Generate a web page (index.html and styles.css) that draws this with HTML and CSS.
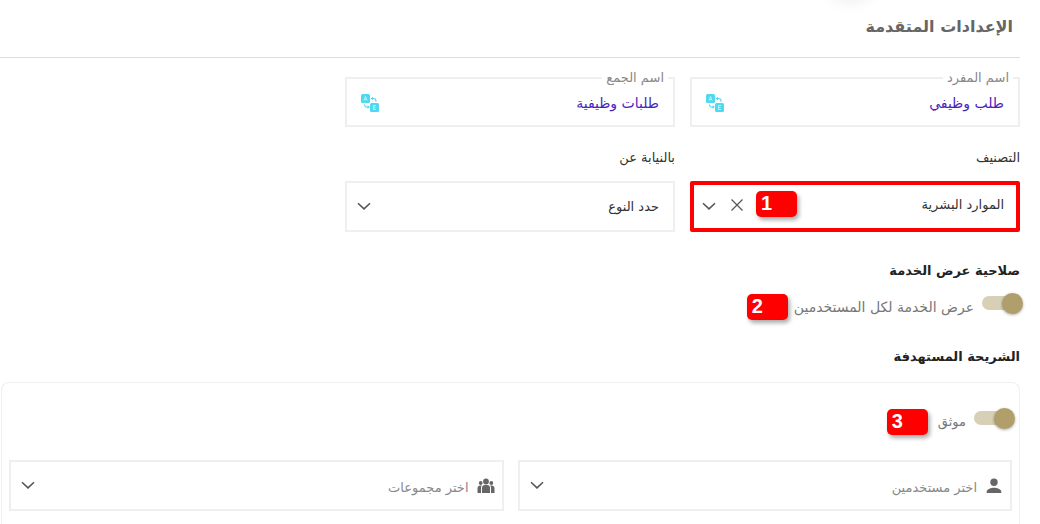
FILE: index.html
```html
<!DOCTYPE html>
<html lang="ar" dir="rtl">
<head>
<meta charset="utf-8">
<title>الإعدادات المتقدمة</title>
<link rel="stylesheet" href="styles.css">
</head>
<body>
<svg class="sprite" aria-hidden="true">
  <symbol id="chevron" viewBox="0 0 14 14"><path d="M1 4.200 7 9.900l6-5.700" fill="none" stroke="currentColor" stroke-width="1.500"/></symbol>
  <symbol id="translate" viewBox="0 0 18 18">
    <rect width="9" height="9" rx="1.500" fill="#4fd8f0"/>
    <rect x="9" y="9" width="9" height="9" rx="1.500" fill="#4fd8f0"/>
    <path d="M3 6.500 4.500 2.500 6 6.500M3.500 5.300h2M15 11.500h-2.500v4H15M12.500 13.500h2" fill="none" stroke="#d2f6fc" stroke-width=".8"/>
    <path d="M11 4.500h1.500a2.500 2.500 0 0 1 2.500 2.500v.8M7.500 13H6a2.500 2.500 0 0 1-2.500-2.500" fill="none" stroke="#4fd8f0" stroke-width="1.100"/>
    <path d="m12 2.700-2.500 1.800L12 6.300zM6.500 11.200 9 13l-2.500 1.800z" fill="#4fd8f0"/>
  </symbol>
</svg>
<div class="bubble"></div>
<main class="page">
  <header class="page-head"><h1>الإعدادات المتقدمة</h1></header>

  <form class="settings">
    <div class="fields">
      <fieldset class="named">
        <legend><label for="singular">اسم المفرد</label></legend>
        <div class="named-row">
          <input id="singular" type="text" value="طلب وظيفي">
          <button type="button" class="icon-button" aria-label="ترجمة"><svg class="translate"><use href="#translate"/></svg></button>
        </div>
      </fieldset>
      <fieldset class="named">
        <legend><label for="plural">اسم الجمع</label></legend>
        <div class="named-row">
          <input id="plural" type="text" value="طلبات وظيفية">
          <button type="button" class="icon-button" aria-label="ترجمة"><svg class="translate"><use href="#translate"/></svg></button>
        </div>
      </fieldset>
    </div>

    <div class="fields choices">
      <div>
        <label class="caption" for="category">التصنيف</label>
        <div class="select marked">
          <select id="category"><option>الموارد البشرية</option></select>
          <svg class="chevron"><use href="#chevron"/></svg>
          <button type="button" class="icon-button clear" aria-label="مسح"><svg viewBox="0 0 14 14"><path d="m1.500 1.500 11 11m0-11-11 11" fill="none" stroke="currentColor" stroke-width="1.200"/></svg></button>
          <span class="step step-in">1</span>
        </div>
      </div>
      <div>
        <label class="caption" for="behalf">بالنيابة عن</label>
        <div class="select">
          <select id="behalf"><option>حدد النوع</option></select>
          <svg class="chevron"><use href="#chevron"/></svg>
        </div>
      </div>
    </div>

    <h2>صلاحية عرض الخدمة</h2>
    <div class="switch-row">
      <input class="switch" type="checkbox" id="all-users" checked>
      <label class="wide-label" for="all-users">عرض الخدمة لكل المستخدمين</label>
      <span class="step">2</span>
    </div>

    <h2 class="audience-title">الشريحة المستهدفة</h2>
    <section class="audience">
      <div class="switch-row">
        <input class="switch" type="checkbox" id="verified" checked>
        <label for="verified">موثق</label>
        <span class="step step-far">3</span>
      </div>
      <div class="pickers">
        <div class="select picker">
          <select aria-label="المستخدمين"><option>اختر مستخدمين</option></select>
          <svg class="lead" viewBox="0 0 18 18" fill="currentColor"><circle cx="9" cy="5.300" r="3.700"/><path d="M1.700 16v-1.500C1.700 12 6.500 10.700 9 10.700s7.300 1.300 7.300 3.800V16z"/></svg>
          <svg class="chevron"><use href="#chevron"/></svg>
        </div>
        <div class="select picker">
          <select aria-label="المجموعات"><option>اختر مجموعات</option></select>
          <svg class="lead" viewBox="0 0 18 18" fill="currentColor"><circle cx="9" cy="4.500" r="2.900"/><circle cx="3.700" cy="6" r="1.900"/><circle cx="14.300" cy="6" r="1.900"/><path d="M5 16v-5a3 3 0 0 1 3-3h2a3 3 0 0 1 3 3v5zM.5 16v-4.500a3 3 0 0 1 3-3h1.300A4 4 0 0 0 4 11v5zM17.500 16v-4.500a3 3 0 0 0-3-3h-1.300A4 4 0 0 1 14 11v5z"/></svg>
          <svg class="chevron"><use href="#chevron"/></svg>
        </div>
      </div>
    </section>
  </form>
</main>
</body>
</html>
```
FILE: styles.css
```css
* {
  box-sizing: border-box;
}

body {
  margin: 0;
  background: #fff;
  color: #333;
  font: 13px/20px "DejaVu Sans", sans-serif;
}

input,
select,
button {
  font: inherit;
  color: inherit;
}

.sprite {
  position: absolute;
  width: 0;
  height: 0;
}

.bubble {
  position: absolute;
  top: -30px;
  left: 830px;
  width: 40px;
  height: 28px;
  border-radius: 50%;
  box-shadow: 0 2px 18px #00000018;
}

.page,
.settings {
  display: flex;
  flex-direction: column;
}

.page {
  min-height: 100vh;
  padding-right: 20px;
}

.settings {
  flex: 1;
}

.page-head {
  padding: 15px 7px 19px;
  border-bottom: 1px solid #ddd;
}

h1 {
  margin: 0;
  color: #666;
  font-size: 16px;
  line-height: 23px;
}

.fields {
  display: grid;
  grid-template-columns: repeat(3, 1fr);
  gap: 15px;
  padding-top: 10px;
}

.named {
  min-width: 0;
  margin: 0;
  padding: 0 14px;
  border: 2px solid #efefef;
}

.named legend {
  margin-right: -9px;
  padding: 0 4px;
  color: #888;
}

.named-row {
  display: flex;
  align-items: center;
  height: 37px;
  padding-bottom: 8px;
}

.named input {
  flex: 1;
  min-width: 0;
  padding: 0;
  border: 0;
  background: none;
  color: #4a1fc0;
  font-size: 14px;
}

.icon-button {
  display: grid;
  padding: 0;
  border: 0;
  background: none;
}

.translate {
  width: 18px;
  height: 18px;
}

.choices {
  padding-top: 21px;
}

.caption {
  display: block;
  margin-bottom: 13px;
}

.select {
  position: relative;
}

.select select {
  display: block;
  width: 100%;
  height: 51px;
  padding: 0 14px;
  border: 2px solid #efefef;
  border-radius: 0;
  appearance: none;
  background: #fff;
}

.select.marked select {
  padding: 0 12px 4px;
  border: 4px solid red;
  border-radius: 2px;
}

.chevron,
.clear svg {
  width: 14px;
  height: 14px;
  color: #555;
}

.chevron {
  position: absolute;
  top: 18px;
  left: 12px;
}

.clear {
  position: absolute;
  top: 17px;
  left: 40px;
}

.step {
  width: 41px;
  height: 26px;
  padding-left: 5px;
  border-radius: 5px;
  background: red;
  box-shadow: 2px 3px 4px #0005;
  color: #fff;
  direction: ltr;
  font: bold 20px/25px "Liberation Sans", Arial, sans-serif;
}

.step-in {
  position: absolute;
  top: 10px;
  left: 66px;
}

h2 {
  margin: 28px 0 0;
  color: #222;
  font-size: 13px;
  line-height: 22px;
}

.switch-row {
  display: flex;
  align-items: center;
  gap: 6px;
  height: 26px;
  margin-top: 12px;
  color: #777;
}

.switch {
  display: flex;
  align-items: center;
  flex: none;
  width: 38px;
  height: 14px;
  margin: 0 0 8px 2px;
  border-radius: 7px;
  appearance: none;
  background: #d7cfb6;
}

.switch::before {
  content: "";
  width: 21px;
  height: 21px;
  margin-right: -3px;
  border-radius: 50%;
  background: #b19f6b;
  box-shadow: 0 1px 3px #0005;
}

.wide-label {
  font-size: 14px;
}

.audience-title {
  margin-top: 26px;
}

.audience {
  flex: 1;
  margin: 14px 0 0 1px;
  padding: 14px 7px 12px;
  border: 1px solid #f0f0f0;
  border-bottom: 0;
  border-radius: 8px 8px 0 0;
}

.step-far {
  margin-right: 4px;
}

.pickers {
  display: grid;
  grid-template-columns: 1fr 1fr;
  gap: 14px;
  margin-top: 25px;
}

.picker select {
  padding: 4px 33px 0;
  color: #888;
}

.lead {
  position: absolute;
  top: 17px;
  right: 9px;
  width: 18px;
  height: 18px;
  color: #666;
}
```
